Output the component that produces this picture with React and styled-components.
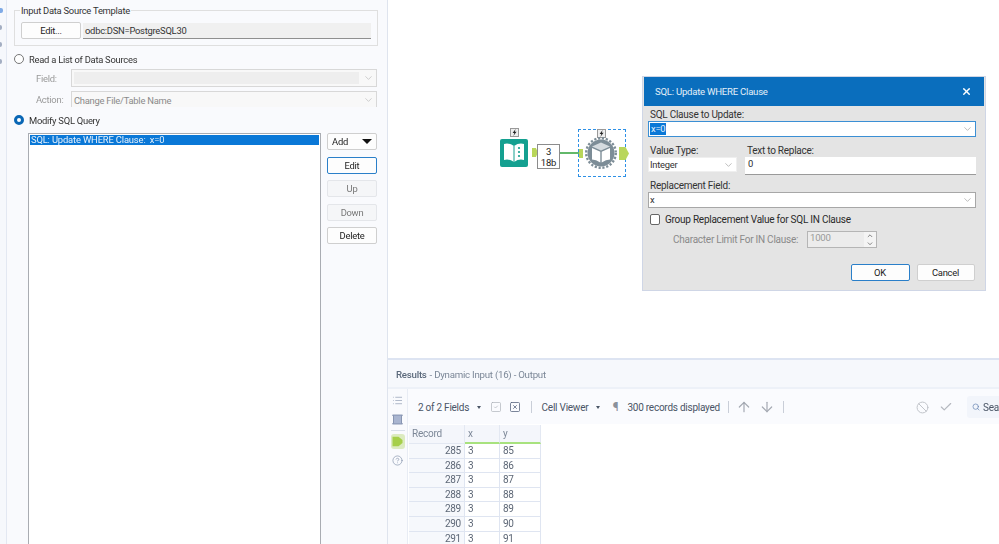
import React from "react";
import styled, { createGlobalStyle } from "styled-components";
import { List, CircleHelp, Ban, Check, ArrowUp, ArrowDown, Search, X, ChevronDown, ChevronUp, SquareCheck, SquareX } from "lucide-react";

const Global = createGlobalStyle`
  html, body { margin: 0; padding: 0; background: #fff; }
  #root { width: 999px; height: 544px; overflow: hidden; }
  * { box-sizing: border-box; }
`;
const Page = styled.div`
  width: 999px; height: 544px; display: flex; overflow: hidden; position: relative;
  font-family: Roboto, "Open Sans", sans-serif; font-size: 9.4px; letter-spacing: -0.25px; color: #333; filter: blur(0.4px);
`;
const Strip = styled.div`
  width: 7px; flex: none; background: #f6f8fc; border-right: 1px solid #e3e8f2;
  display: flex; flex-direction: column; align-items: flex-start; padding-top: 8px; gap: 12px;
`;
const StripDot = styled.span`
  width: ${p => p.$w || 2}px; height: 5px; border-radius: 0 2px 2px 0; background: ${p => p.$c || "#a3aec2"};
`;
const Panel = styled.div`
  width: 381px; flex: none; background: #f9fafd; border-right: 1px solid #dfe4ee; padding: 10px 9px 0 7px; display: flex; flex-direction: column;
`;
const GroupBox = styled.div`
  padding: 11px 6px 0 6px; height: 36px; border: 1px solid #dfdfdf; display: flex; gap: 2px; align-items: flex-start; position: relative;
`;
const Legend = styled.span`
  position: absolute; top: -6px; left: 5px; background: #f9fafd; padding: 0 1px; line-height: 12px; color: #333;
`;
const WinButton = styled.button`
  font: inherit; letter-spacing: inherit; color: ${p => p.$off ? "#777" : "#222"}; width: ${p => p.$w || 50}px; height: 17px; padding: 0; border-radius: 2px;
  background: ${p => p.$off ? "#f5f6f8" : "#fdfdfd"};
  border: 1px solid ${p => p.$focus ? "#2a7fc9" : p.$off ? "#e4e6ea" : "#cfcfcf"};
  display: flex; align-items: center; justify-content: center; gap: 14px; flex: none;
`;
const PathField = styled.div`
  flex: 1; height: 16px; margin-top: 1px; background: #f0f0f0; border-bottom: 1px solid #8f8f8f; padding-left: 2px; line-height: 15px; color: #333;
`;
const RadioRow = styled.div`
  display: flex; align-items: center; gap: 5px; height: 14px; margin-top: ${p => p.$mt}px; color: #333;
`;
const Radio = styled.span`
  width: 10px; height: 10px; border-radius: 50%; flex: none; background: #fff;
  border: ${p => p.$on ? "3px solid #0a67b5" : "1px solid #777"};
`;
const FieldRow = styled.div`
  display: flex; align-items: center; margin: ${p => p.$mt}px 0 0 22px; height: ${p => p.$h}px;
`;
const FieldLabel = styled.span`
  width: 35px; flex: none; color: #999; padding-top: 1px;
`;
const FieldSelect = styled.div`
  flex: 1; height: 100%; border: 1px solid #d8d8d8; ${p => p.$open && "border-bottom: none;"} background: #f8f8f8; padding: 2px 17px 2px 2px; position: relative; color: #8a8a8a; line-height: 13px;
  margin-right: 1px;
`;
const FieldFill = styled.div`
  background: #eeeeee; height: 100%;
`;
const CaretSlot = styled.span`
  position: absolute; right: 2px; top: 50%; transform: translateY(-50%); display: flex; color: ${p => p.$c || "#aaa"};
`;
const ListArea = styled.div`
  display: flex; gap: 6px; margin: 6px 0 0 14px; flex: 1; min-height: 0;
`;
const ListBox = styled.div`
  width: 293px; flex: none; height: 420px; background: #fff; border: 1px solid #a9acb2; border-bottom: none; padding: 1px;
`;
const ListItem = styled.div`
  background: #0a78d7; color: #e6f1fb; height: 10px; line-height: 10px; padding-left: 1px; white-space: pre; letter-spacing: -0.15px;
`;
const ButtonCol = styled.div`
  display: flex; flex-direction: column; gap: 6.5px;
`;
const AddArrow = styled.span`
  width: 0; height: 0; border-left: 5px solid transparent; border-right: 5px solid transparent; border-top: 5px solid #111;
`;
const Main = styled.div`
  flex: 1; min-width: 0; display: flex; flex-direction: column;
`;
const Canvas = styled.div`
  height: 360px; flex: none; position: relative; background: #fff; border-bottom: 2px solid #dde4f2;
`;
const NodeSpot = styled.div`
  position: absolute; left: ${p => p.$x}px; top: ${p => p.$y}px; width: ${p => p.$w}px; height: ${p => p.$h}px;
`;
const Browse = styled(NodeSpot)`
  background: #fff; border: 1px solid #8c8c8c; color: #222; text-align: center; font-size: 9.5px; line-height: 11px; padding-top: 1px;
`;
const Wire = styled(NodeSpot)`
  background: #62b86a;
`;
const Selection = styled(NodeSpot)`
  border: 1px dashed #2d90e6;
`;
const Anchor = styled(NodeSpot)`
  background: #b9d65a;
  clip-path: ${p => p.$arrow ? "polygon(0 0, 65% 0, 100% 50%, 65% 100%, 0 100%)" : "none"};
`;
const Dialog = styled.div`
  position: absolute; left: 254px; top: 76px; width: 344px; height: 215px; background: #e4e4e4; border: 1px solid #cfd6e6; display: flex; flex-direction: column;
`;
const TitleBar = styled.div`
  height: 29px; flex: none; background: #0a6ebd; color: #e3eef8; display: flex; align-items: center; justify-content: space-between; padding: 0 12px 0 11px; margin: 0 1px; font-size: 9.6px;
`;
const DialogBody = styled.div`
  padding: 2px 9px 0 5px; display: flex; flex-direction: column; flex: 1; color: #2a2a2a;
`;
const DLabel = styled.div`
  line-height: 14px; height: 13px; padding-left: 2px; color: #333; font-size: 10px; margin-top: ${p => p.$mt || 0}px;
`;
const Combo = styled.div`
  height: ${p => p.$h || 16}px; background: #fff; border: 1px solid ${p => p.$focus ? "#3b8fd4" : "#a7a7a7"}; ${p => p.$flat && "border-color: #efefef;"}
  position: relative; line-height: 14px; padding-left: 1px; color: #333;
`;
const Selected = styled.span`
  background: #0a78d7; color: #e6f1fb; padding: 0 1px; display: inline-block; line-height: 12px;
`;
const TwoCols = styled.div`
  display: flex; gap: 8px; margin-top: 7px; height: 31px;
`;
const Col = styled.div`
  width: ${p => p.$w ? p.$w + "px" : "auto"}; flex: ${p => p.$w ? "none" : 1};
`;
const TextInput = styled.div`
  height: 18px; background: #fff; border-bottom: 1px solid #9a9a9a; padding-left: 3px; line-height: 13px;
`;
const CheckRow = styled.div`
  display: flex; align-items: center; gap: 5px; margin: 5px 0 0 2px; height: 13px; font-size: 10px;
`;
const CheckBox = styled.span`
  width: 10px; height: 11px; background: #fff; border: 1px solid #666; border-radius: 2px; flex: none;
`;
const LimitRow = styled.div`
  display: flex; align-items: center; margin: 5px 0 0 25px; height: 17px; color: #8a8a8a; font-size: 10px;
`;
const LimitLabel = styled.span`
  width: 134px; flex: none; white-space: nowrap;
`;
const Spin = styled.div`
  width: 70px; height: 17px; border: 1px solid #b5b5b5; background: #ececec; color: #999; display: flex; justify-content: space-between; padding-left: 2px; line-height: 12px; font-size: 9.6px;
`;
const SpinBtns = styled.span`
  width: 12px; display: flex; flex-direction: column; align-items: center; background: #f4f4f4; color: #444;
`;
const DialogActions = styled.div`
  display: flex; justify-content: flex-end; gap: 7px; margin-top: 16px; padding-right: 1.5px;
`;
const Results = styled.div`
  flex: 1; min-height: 0; display: flex; flex-direction: column; background: #fff;
`;
const ResultsHead = styled.div`
  height: 29px; flex: none; background: #f6f8fc; border-bottom: 2px solid #edf1f8; padding: 2px 0 0 8px; display: flex; align-items: center; color: #7b8797; font-size: 9.7px;
`;
const ResultsTitle = styled.b`
  font-weight: 500; color: #5c6a7c; margin-right: 3px;
`;
const ResultsBody = styled.div`
  flex: 1; min-height: 0; display: flex;
`;
const Rail = styled.div`
  width: 20px; flex: none; background: #f9fafd; border-right: 1px solid #e8ecf4; display: flex; flex-direction: column; align-items: center; padding-top: 2px; color: #7f8ea8;
`;
const RailItem = styled.div`
  width: 14px; height: 19px; margin-top: ${p => p.$mt || 0}px; display: flex; align-items: center; justify-content: center;
`;
const RailSep = styled.div`
  width: 14px; height: 1px; background: #d9dfea; margin: 1px 0 3px;
`;
const ActiveTag = styled.div`
  width: 14px; height: 15px; background: #dcebc0; border-radius: 3px; display: flex; align-items: center; justify-content: center;
`;
const ResultsMain = styled.div`
  flex: 1; min-width: 0; display: flex; flex-direction: column;
`;
const Toolbar = styled.div`
  height: 35px; flex: none; background: #fafbfe; display: flex; align-items: center; padding: 1px 0 0 10px; color: #4a5566; font-size: 10px; white-space: nowrap;
`;
const Tool = styled.span`
  display: flex; align-items: center; color: ${p => p.$c || "inherit"}; margin-left: ${p => p.$ml || 0}px; font-size: ${p => p.$fs || 10}px;
`;
const TinyCaret = styled.span`
  width: 0; height: 0; border-left: 2.5px solid transparent; border-right: 2.5px solid transparent; border-top: 3px solid #4a5566; margin-left: ${p => p.$ml}px;
`;
const Sep = styled.span`
  width: 1px; height: 12px; background: #c9ced8; margin-left: ${p => p.$ml}px;
`;
const Spacer = styled.span`
  flex: 1;
`;
const SearchBox = styled.div`
  width: 32px; height: 22px; background: #f2f5fb; border-radius: 3px 0 0 3px; margin-left: 14px; display: flex; align-items: center; padding-left: 5px; gap: 3px; color: #4a5566; flex: none;
`;
const Grid = styled.div`
  display: grid; grid-template-columns: 56px 35px 41px; grid-template-rows: 19px; grid-auto-rows: 14.6px; width: 133px; font-size: 10px; color: #5d6776; padding-left: 1px; margin-top: 1px;
`;
const HeadCell = styled.div`
  background: #f4f6fb; border-right: 1px solid #e3e8f2; padding-left: 3px; line-height: 17px; color: #7c8797;
  border-bottom: ${p => p.$green ? "2px solid #a8e27e" : "1px solid #e3e8f2"};
`;
const Cell = styled.div`
  border-right: 1px solid #dfe5f1; border-bottom: 1px solid #dfe5f1; line-height: 13px; padding: 0 3px; text-align: ${p => p.$r ? "right" : "left"};
  background: ${p => p.$r ? "#f6f8fc" : "#fff"};
`;
const GridRow = styled.div`
  display: contents;
`;

const rows = [[285, 3, 85], [286, 3, 86], [287, 3, 87], [288, 3, 88], [289, 3, 89], [290, 3, 90], [291, 3, 91]];

const Bolt = () => (
  <svg width="9" height="9" viewBox="0 0 9 9"><rect x=".5" y=".5" width="8" height="8" fill="#eee" stroke="#999" /><path d="M5.6 1 2.6 5h1.8L3.3 8 6.6 3.8H4.8z" fill="#222" /></svg>
);
const BookIcon = () => (
  <svg width="28" height="28" viewBox="0 0 28 28">
    <rect width="28" height="28" rx="2" fill="#14a090" />
    <path d="M14 7 Q9 3.5 4 5V21Q9 19.5 14 23Q19 19.5 24 21V5Q19 3.5 14 7Z" fill="#fff" />
    <path d="M14 7V23" stroke="#14a090" strokeWidth="1" />
    <circle cx="19" cy="9" r="1.1" fill="#14a090" /><circle cx="19" cy="13" r="1.1" fill="#14a090" /><circle cx="19" cy="17" r="1.1" fill="#14a090" />
  </svg>
);
const GearIcon = () => (
  <svg width="32" height="32" viewBox="0 0 32 32">
    <circle cx="16" cy="16" r="13.5" fill="#7d8d97" />
    <circle cx="16" cy="16" r="14.8" fill="none" stroke="#7d8d97" strokeWidth="2.4" strokeDasharray="2.2 1.7" />
    <path d="M16 5.5 25 9.5 16 13.5 7 9.5Z" fill="#d5dbdf" />
    <path d="M7 11 15.3 14.7V25.5Q11 22.5 7 22.5Z" fill="#fff" />
    <path d="M25 11 16.7 14.7V25.5Q21 22.5 25 22.5Z" fill="#fff" />
  </svg>
);
const TableIcon = () => (
  <svg width="11" height="11" viewBox="0 0 11 11"><path d="M.5 1H10.5L9.5 2V9L10.5 10H.5L1.5 9V2Z" fill="#a9b5d0" stroke="#7584a3" strokeWidth=".8" /></svg>
);
const TagIcon = () => (
  <svg width="11" height="11" viewBox="0 0 11 11"><path d="M.5 .8H6.5L10.5 4V7L6.5 10.2H.5Z" fill="#a6cf4a" /></svg>
);

export default function App() {
  return (
    <Page>
      <Global />
      <Strip>
        <StripDot $w={3} $c="#7faae6" />
        <StripDot />
        <StripDot />
        <StripDot />
      </Strip>
      <Panel>
        <GroupBox>
          <Legend>Input Data Source Template</Legend>
          <WinButton $w={60}>Edit...</WinButton>
          <PathField>odbc:DSN=PostgreSQL30</PathField>
        </GroupBox>
        <RadioRow $mt={6}><Radio />Read a List of Data Sources</RadioRow>
        <FieldRow $mt={3} $h={18}>
          <FieldLabel>Field:</FieldLabel>
          <FieldSelect><FieldFill /><CaretSlot><ChevronDown size={11} strokeWidth={1.2} /></CaretSlot></FieldSelect>
        </FieldRow>
        <FieldRow $mt={4} $h={16}>
          <FieldLabel>Action:</FieldLabel>
          <FieldSelect $open>Change File/Table Name<CaretSlot><ChevronDown size={11} strokeWidth={1.2} /></CaretSlot></FieldSelect>
        </FieldRow>
        <RadioRow $mt={6}><Radio $on />Modify SQL Query</RadioRow>
        <ListArea>
          <ListBox><ListItem>{"SQL: Update WHERE Clause:  x=0"}</ListItem></ListBox>
          <ButtonCol>
            <WinButton>Add<AddArrow /></WinButton>
            <WinButton $focus>Edit</WinButton>
            <WinButton $off>Up</WinButton>
            <WinButton $off>Down</WinButton>
            <WinButton>Delete</WinButton>
          </ButtonCol>
        </ListArea>
      </Panel>
      <Main>
        <Canvas>
          <NodeSpot $x={122} $y={128} $w={9} $h={9}><Bolt /></NodeSpot>
          <NodeSpot $x={112} $y={139} $w={28} $h={28}><BookIcon /></NodeSpot>
          <Anchor $arrow $x={144} $y={148} $w={6} $h={9} />
          <Browse $x={149} $y={144} $w={23} $h={25}>3<br />18b</Browse>
          <Wire $x={172} $y={152} $w={20} $h={2} />
          <Selection $x={190} $y={129} $w={48} $h={48} />
          <Anchor $x={191} $y={149} $w={4} $h={9} />
          <NodeSpot $x={209} $y={129} $w={9} $h={9}><Bolt /></NodeSpot>
          <NodeSpot $x={197} $y={137} $w={32} $h={32}><GearIcon /></NodeSpot>
          <Anchor $arrow $x={231} $y={147} $w={10} $h={13} />
          <Dialog>
            <TitleBar>SQL: Update WHERE Clause<X size={11} strokeWidth={3} color="#fff" /></TitleBar>
            <DialogBody>
              <DLabel>SQL Clause to Update:</DLabel>
              <Combo $focus><Selected>x=0</Selected><CaretSlot $c="#888"><ChevronDown size={11} strokeWidth={1.2} /></CaretSlot></Combo>
              <TwoCols>
                <Col $w={89}>
                  <DLabel>Value Type:</DLabel>
                  <Combo $flat $h={15}>Integer<CaretSlot $c="#888"><ChevronDown size={11} strokeWidth={1.2} /></CaretSlot></Combo>
                </Col>
                <Col>
                  <DLabel>Text to Replace:</DLabel>
                  <TextInput>0</TextInput>
                </Col>
              </TwoCols>
              <DLabel $mt={4}>Replacement Field:</DLabel>
              <Combo>x<CaretSlot $c="#888"><ChevronDown size={11} strokeWidth={1.2} /></CaretSlot></Combo>
              <CheckRow><CheckBox />Group Replacement Value for SQL IN Clause</CheckRow>
              <LimitRow>
                <LimitLabel>Character Limit For IN Clause:</LimitLabel>
                <Spin>1000<SpinBtns><ChevronUp size={8} /><ChevronDown size={8} /></SpinBtns></Spin>
              </LimitRow>
              <DialogActions>
                <WinButton $w={59} $focus>OK</WinButton>
                <WinButton $w={58}>Cancel</WinButton>
              </DialogActions>
            </DialogBody>
          </Dialog>
        </Canvas>
        <Results>
          <ResultsHead><ResultsTitle>Results</ResultsTitle>- Dynamic Input (16) - Output</ResultsHead>
          <ResultsBody>
            <Rail>
              <RailItem><List size={11} strokeWidth={1.3} /></RailItem>
              <RailItem><TableIcon /></RailItem>
              <RailSep />
              <ActiveTag><TagIcon /></ActiveTag>
              <RailItem $mt={2}><CircleHelp size={11} strokeWidth={1.4} /></RailItem>
            </Rail>
            <ResultsMain>
              <Toolbar>
                2 of 2 Fields
                <TinyCaret $ml={7.5} />
                <Tool $ml={9.5} $c="#a9adb5"><SquareCheck size={12} strokeWidth={1.3} /></Tool>
                <Tool $ml={6.5} $c="#5a6780"><SquareX size={12} strokeWidth={1.6} /></Tool>
                <Sep $ml={10.5} />
                <Tool $ml={9.5}>Cell Viewer</Tool>
                <TinyCaret $ml={7.5} />
                <Tool $ml={13} $fs={12} $c="#8b919c">¶</Tool>
                <Tool $ml={9}>300 records displayed</Tool>
                <Sep $ml={8} />
                <Tool $ml={7} $c="#a4a9b2"><ArrowUp size={16} strokeWidth={1.8} /></Tool>
                <Tool $ml={7} $c="#a4a9b2"><ArrowDown size={16} strokeWidth={1.8} /></Tool>
                <Sep $ml={8} />
                <Spacer />
                <Tool $c="#bfc2c8"><Ban size={13} strokeWidth={1.8} /></Tool>
                <Tool $ml={10} $c="#b4b8bf"><Check size={14} strokeWidth={2} /></Tool>
                <SearchBox><Search size={10} color="#5f7fae" />Sea</SearchBox>
              </Toolbar>
              <Grid>
                <GridRow>
                  <HeadCell>Record</HeadCell>
                  <HeadCell $green>x</HeadCell>
                  <HeadCell $green>y</HeadCell>
                </GridRow>
                {rows.map(r => (
                  <GridRow key={r[0]}>
                    <Cell $r>{r[0]}</Cell>
                    <Cell>{r[1]}</Cell>
                    <Cell>{r[2]}</Cell>
                  </GridRow>
                ))}
              </Grid>
            </ResultsMain>
          </ResultsBody>
        </Results>
      </Main>
    </Page>
  );
}
